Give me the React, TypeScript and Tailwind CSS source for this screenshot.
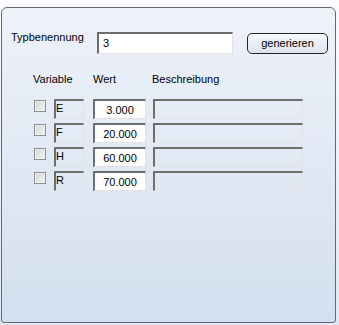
const rows = [
  { name: "E", value: "3.000" },
  { name: "F", value: "20.000" },
  { name: "H", value: "60.000" },
  { name: "R", value: "70.000" },
]

const sunken =
  "border-t-2 border-l-2 border-r border-b border-t-[#6e6e6e] border-l-[#6e6e6e] border-r-[#e2e2e2] border-b-[#e2e2e2]"

function Checkbox() {
  return (
    <div className="mt-[1px] size-[12px] border border-[#8e8f8f] bg-linear-to-br from-[#d2d3d4] to-[#f7f7f7] shadow-[inset_0_0_0_1px_#eeeeee]" />
  )
}

export default function App() {
  return (
    <div
      className="h-[325px] w-[339px] bg-linear-to-b from-[#fafbfd] to-[#e1e8f3] pt-[7px] pl-[1px] text-[11px] leading-[13px] text-black"
      style={{ fontFamily: '"Liberation Sans", Arial, sans-serif' }}
    >
      <div className="h-[316px] w-[335px] rounded-t-[6px] rounded-b-[3px] border border-[#656a72] bg-linear-to-b from-[#eef2f9] to-[#d3dfef]">
        {/* Typbenennung */}
        <div className="flex items-start pt-[24px] pl-[9px]">
          <span className="w-[86px] -mt-[1px]">Typbenennung</span>
          <div className={`flex h-[22px] w-[136px] items-center bg-white pl-[4px] ${sunken}`}>
            3
          </div>
          <button className="ml-[14px] mt-[1px] flex h-[21px] w-[81px] items-center justify-center rounded-[5px] border border-[#262626] bg-linear-to-b from-[#f7f9fc] to-[#dce3ed] pb-[1px]">
            generieren
          </button>
        </div>

        {/* Spaltenköpfe */}
        <div className="mt-[19px] flex pl-[31px]">
          <span className="w-[60px]">Variable</span>
          <span className="w-[59px]">Wert</span>
          <span>Beschreibung</span>
        </div>

        {/* Variablen */}
        <div className="mt-[13px] flex flex-col gap-[4px] pl-[32px]">
          {rows.map((r) => (
            <div key={r.name} className="flex items-start">
              <Checkbox />
              <div className={`ml-[8px] h-[20px] w-[30px] pl-[0px] pt-[1px] ${sunken}`}>
                {r.name}
              </div>
              <div
                className={`ml-[9px] flex h-[20px] w-[53px] items-center justify-center bg-white pt-[1px] ${sunken}`}
              >
                {r.value}
              </div>
              <div className={`ml-[7px] h-[20px] w-[150px] ${sunken}`} />
            </div>
          ))}
        </div>
      </div>
    </div>
  )
}
